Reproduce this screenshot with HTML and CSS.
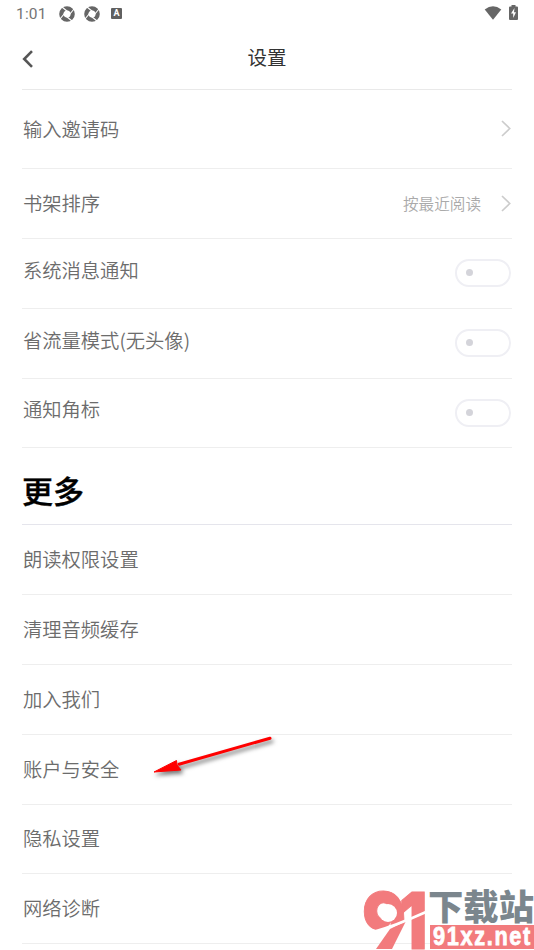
FILE: index.html
```html
<!DOCTYPE html>
<html lang="zh-CN">
<head>
<meta charset="utf-8">
<title>设置</title>
<link rel="stylesheet" href="styles.css">
</head>
<body>
<div class="screen">
  <header class="status">
    <span class="clock">1:01</span>
    <svg class="app-icon" viewBox="0 0 16 16"><circle cx="8" cy="8" r="5.700" /><path d="M3 1 8.500 5.500M15 3 10.500 8.500M13 15 7.500 10.500M1 13 5.500 7.500" /></svg>
    <svg class="app-icon second" viewBox="0 0 16 16"><circle cx="8" cy="8" r="5.700" /><path d="M3 1 8.500 5.500M15 3 10.500 8.500M13 15 7.500 10.500M1 13 5.500 7.500" /></svg>
    <span class="badge">A</span>
    <svg class="wifi" viewBox="0 0 18 14"><path d="M.7 3.4Q9-2.7 17.3 3.4L9 13.7Z" /></svg>
    <svg class="battery" viewBox="0 0 9 15"><path d="M2.5 0h4v1.5H8q1 0 1 1V14q0 1-1 1H1q-1 0-1-1V2.500q0-1 1-1h1.500Z" /><path class="bolt" d="M5.500 3 2 8.500h2.200V13L7 7.300H5Z" /></svg>
  </header>
  <nav class="title-bar">
    <svg class="back" viewBox="0 0 12 20"><path d="M10 2.200 2.200 10l7.800 7.800" /></svg>
    <h1>设置</h1>
  </nav>
  <main>
    <div class="row invite"><span>输入邀请码</span><svg class="chevron" viewBox="0 0 10 17"><path d="m1 1 7.700 7.500L1 16" /></svg></div>
    <div class="row sort"><span>书架排序</span><span class="value">按最近阅读</span><svg class="chevron" viewBox="0 0 10 17"><path d="m1 1 7.700 7.500L1 16" /></svg></div>
    <div class="row toggle-row"><span>系统消息通知</span><i class="toggle"></i></div>
    <div class="row toggle-row"><span>省流量模式(无头像)</span><i class="toggle"></i></div>
    <div class="row toggle-row short"><span>通知角标</span><i class="toggle"></i></div>
    <h2>更多</h2>
    <div class="row">朗读权限设置</div>
    <div class="row">清理音频缓存</div>
    <div class="row">加入我们</div>
    <div class="row">账户与安全</div>
    <div class="row short">隐私设置</div>
    <div class="row">网络诊断</div>
  </main>
  <svg class="arrow" viewBox="0 0 130 50"><path d="M122 10.200 31 36.200" /><polygon points="6,44 28.500,32.500 29,37 33,42" /></svg>
  <svg class="watermark" viewBox="0 0 172 62">
    <clipPath id="above"><path d="M0 0H64V24Q32 38 11 43L0 36Z" /></clipPath>
    <g clip-path="url(#above)"><text class="mark" transform="translate(-1 61) scale(.84 1)">9</text></g>
    <circle class="hole" cx="25" cy="25" r="9" />
    <polygon class="streak" points="13,61 29,61 43,33 27,41" />
    <text class="mark" transform="translate(36 61) scale(.8 1)">1</text>
    <path class="slash" d="M10 44Q32 38 63 24" />
    <text class="site" x="65" y="32" textLength="106" lengthAdjust="spacingAndGlyphs">下载站</text>
    <rect x="67" y="37" width="105" height="24" />
    <text class="domain" transform="translate(70 57)" textLength="99" lengthAdjust="spacingAndGlyphs">91xz.net</text>
  </svg>
</div>
</body>
</html>
```
FILE: styles.css
```css
* { box-sizing: border-box; }
body { margin: 0; background: #fff; font-family: "Noto Sans CJK SC", sans-serif; }
.screen { position: relative; width: 534px; height: 950px; overflow: hidden; background: #fff; }
svg { flex: none; overflow: visible; }

.status { display: flex; align-items: center; height: 28px; padding: 0 16px; }
.clock { width: 43px; color: #747474; font: 15.5px/28px Roboto, sans-serif; letter-spacing: .2px; }
.app-icon { width: 16px; height: 16px; margin-top: -1px; }
.app-icon.second { margin-left: 9px; }
.app-icon circle { fill: none; stroke: #666; stroke-width: 4.200; }
.app-icon path { fill: none; stroke: #fff; stroke-width: 1.100; }
.badge { width: 11px; height: 11px; margin: -1px 0 0 11px; border-radius: 1px; background: #606060; color: #fff; font: bold 9px/11px Roboto, sans-serif; text-align: center; }
.wifi { width: 18px; height: 14px; margin-left: auto; margin-top: -2px; fill: #666; }
.battery { width: 9px; height: 15px; margin: -3px 0 0 7px; fill: #666; }
.battery .bolt { fill: #fff; }

.title-bar { display: flex; align-items: center; height: 62px; margin: 0 22px; border-bottom: 1px solid #e9e9e9; }
.back { width: 12px; height: 20px; fill: none; stroke: #555; stroke-width: 2.6; }
h1 { flex: 1; margin: 0 12px 4px 0; color: #333; font-size: 19.500px; font-weight: 400; line-height: 28px; text-align: center; }

main { margin: 0 22px; }
.row { display: flex; align-items: center; height: 70px; padding: 0 1px 2px 1px; border-bottom: 1px solid #eee; color: #6c6c6c; font-size: 19.300px; font-weight: 350; line-height: 28px; white-space: nowrap; }
.row.short { height: 69px; }
.row.invite { height: 79px; padding-bottom: 1px; }
.chevron { width: 10px; height: 17px; margin-left: auto; fill: none; stroke: #ccc; stroke-width: 1.700; }
.sort .chevron { position: relative; top: 1px; }
.value { margin-left: auto; color: #aaa; font-size: 15.600px; }
.value + .chevron { margin-left: 20px; }
.row.toggle-row { padding-bottom: 8px; }
.toggle { position: relative; top: 3px; width: 56px; height: 28px; margin-left: auto; padding: 8px 9px; border: 2px solid #efeff4; border-radius: 14px; }
.short .toggle { top: 4px; }
.toggle::before { display: block; width: 7px; height: 7px; border-radius: 50%; background: #d4d4da; content: ""; }
h2 { height: 77px; margin: 0; padding-top: 19px; border-bottom: 1px solid #e5e5ec; color: #000; font-size: 31px; font-weight: 500; line-height: 46px; -webkit-text-stroke: .4px #000; }

.arrow { position: absolute; left: 148px; top: 728px; width: 130px; height: 50px; filter: drop-shadow(2px 3px 2px #0008); }
.arrow path { fill: none; stroke: #f00; stroke-width: 3; stroke-linecap: round; }
.arrow polygon { fill: #f00; stroke: #f00; stroke-width: 1; }
.watermark { position: absolute; left: 363px; top: 888px; width: 172px; height: 62px; }
.watermark rect, .streak { fill: #f27b7d; }
.hole { fill: #fff; }
.mark { fill: #f27b7d; stroke: #f27b7d; stroke-width: 1; font: 900 78px Inter, sans-serif; }
.slash { fill: none; stroke: #fff; stroke-width: 2.500; }
.site { fill: #7b868d; font: 900 35px "Noto Sans CJK SC", sans-serif; }
.domain { fill: #fff; stroke: #fff; stroke-width: .8; font: bold 26px "Liberation Sans", sans-serif; letter-spacing: 2px; }
```
